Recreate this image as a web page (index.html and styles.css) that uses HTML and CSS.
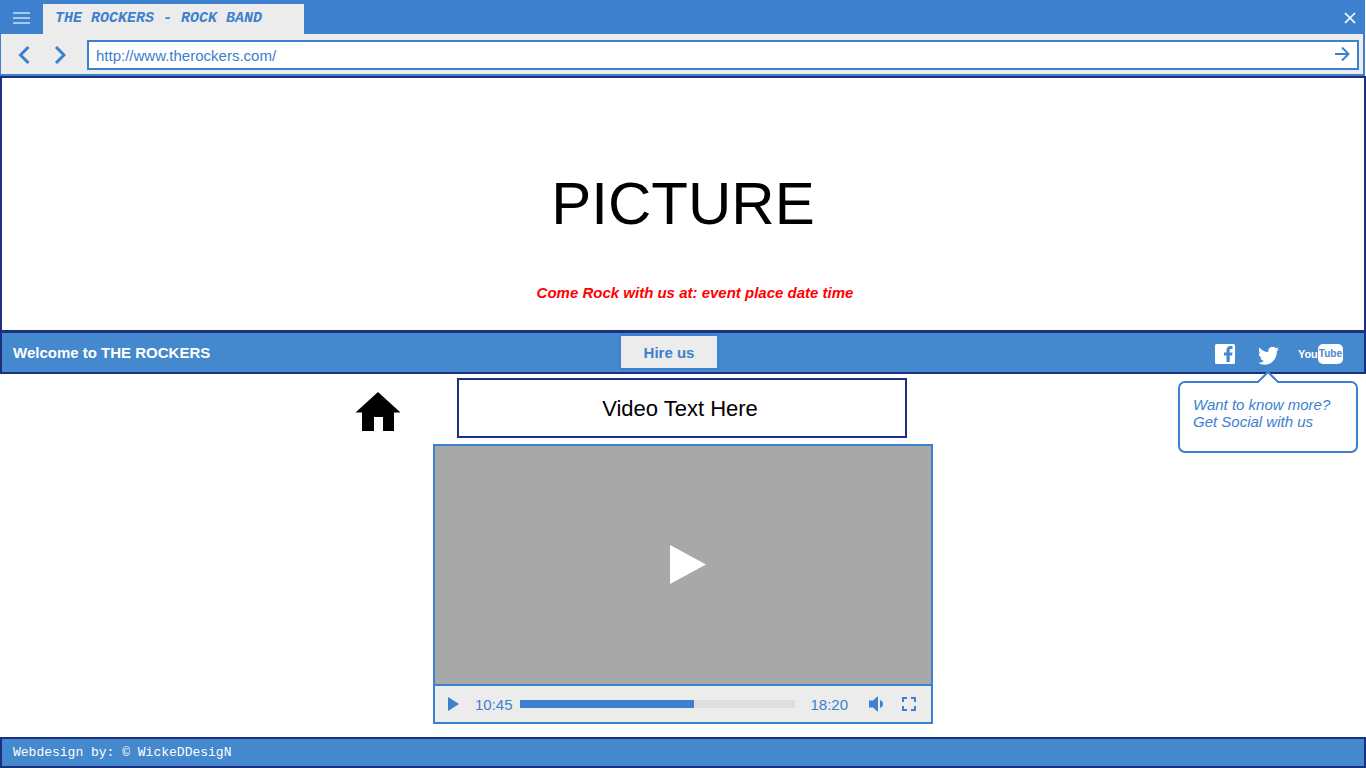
FILE: index.html
```html
<!DOCTYPE html>
<html lang="en">
<head>
<meta charset="utf-8">
<meta name="viewport" content="width=device-width, initial-scale=1">
<title>THE ROCKERS - ROCK BAND</title>
<link rel="stylesheet" href="styles.css">
</head>
<body class="page">
<header class="browser">
  <div class="tabs">
    <button class="icon-btn menu-btn" type="button" aria-label="Menu">
      <svg width="17" height="12" viewBox="0 0 17 12"><path d="M0 1h17M0 6h17M0 11h17" stroke="currentColor" stroke-width="2"/></svg>
    </button>
    <div class="tab">THE ROCKERS - ROCK BAND</div>
    <button class="icon-btn close-btn" type="button" aria-label="Close">
      <svg width="12" height="12" viewBox="0 0 12 12"><path d="M1 1l10 10M11 1L1 11" stroke="currentColor" stroke-width="1.7"/></svg>
    </button>
  </div>
  <div class="toolbar">
    <button class="icon-btn" type="button" aria-label="Back">
      <svg width="12" height="18" viewBox="0 0 12 18"><path d="M10.500 1L2.500 9l8 8" fill="none" stroke="currentColor" stroke-width="3"/></svg>
    </button>
    <button class="icon-btn" type="button" aria-label="Forward">
      <svg width="12" height="18" viewBox="0 0 12 18"><path d="M2 1l8 8-8 8" fill="none" stroke="currentColor" stroke-width="3"/></svg>
    </button>
    <form class="address">
      <input class="address-input" type="text" aria-label="Address" value="http://www.therockers.com/">
      <button class="icon-btn" type="button" aria-label="Go">
        <svg width="16" height="16" viewBox="0 0 16 16"><path d="M0 7h14M7 .5L13.500 7 7 13.500" fill="none" stroke="currentColor" stroke-width="2"/></svg>
      </button>
    </form>
  </div>
</header>

<section class="hero">
  <h1 class="hero-title">PICTURE</h1>
  <p class="hero-event">Come Rock with us at: event place date time</p>
</section>

<nav class="navbar">
  <strong class="welcome">Welcome to THE ROCKERS</strong>
  <button class="hire" type="button">Hire us</button>
  <div class="social">
    <a class="social-link" href="#facebook" aria-label="Facebook">
      <svg width="20" height="20" viewBox="0 0 20 20"><rect width="20" height="20" rx="1.500" fill="currentColor"/><path fill="#4488ce" d="M11.500 18v-6.500H9V8.500h2.500V6.300c0-2.700 1.300-4.300 4-4.300h2v3H16c-1 0-1.300.5-1.300 1.400v2.100h2.800l-.4 3h-2.400V18z"/></svg>
    </a>
    <a class="social-link twitter" href="#twitter" aria-label="Twitter">
      <svg width="21" height="18" viewBox="0 2.500 24 19.500" preserveAspectRatio="none"><path fill="currentColor" d="M23.950 4.570a10 10 0 0 1-2.820.77 4.960 4.960 0 0 0 2.160-2.720c-.95.550-2 .96-3.130 1.180a4.920 4.920 0 0 0-8.380 4.480C7.690 8.100 4.070 6.130 1.640 3.160a4.820 4.820 0 0 0-.67 2.480c0 1.710.87 3.210 2.190 4.100a4.900 4.900 0 0 1-2.230-.62v.06a4.920 4.920 0 0 0 3.950 4.830 5 5 0 0 1-2.210.08 4.940 4.940 0 0 0 4.600 3.420A9.870 9.870 0 0 1 0 19.540a14 14 0 0 0 7.550 2.210c9.050 0 14-7.500 14-13.980 0-.21 0-.42-.02-.63a9.940 9.940 0 0 0 2.460-2.550z"/></svg>
    </a>
    <a class="social-link youtube" href="#youtube"><span class="you">You</span><span class="tube">Tube</span></a>
  </div>
</nav>

<main class="content">
  <a class="home" href="#home" aria-label="Home">
    <svg width="46" height="40" viewBox="0 0 46 40"><path d="M23 0L45.500 20.500H39V39H28V25h-9v14H7V20.500H.5z"/></svg>
  </a>
  <div class="media">
    <h2 class="video-title">Video Text Here</h2>
    <div class="player">
      <button class="screen" type="button" aria-label="Play video">
        <svg width="38" height="40" viewBox="0 0 38 40"><path d="M1 0v39l36-19.500z" fill="#fff"/></svg>
      </button>
      <div class="controls">
        <button class="icon-btn" type="button" aria-label="Play">
          <svg width="12" height="14" viewBox="0 0 12 14"><path d="M1 0v14l11-7z" fill="currentColor"/></svg>
        </button>
        <span class="elapsed">10:45</span>
        <input class="seek" type="range" min="0" max="275" value="174" aria-label="Seek">
        <span class="total">18:20</span>
        <button class="icon-btn volume" type="button" aria-label="Volume">
          <svg width="15" height="16" viewBox="0 0 15 16"><path d="M0 4.500h4L9 0v16l-5-4.500H0zM11 4q3 1.200 3 4t-3 4z" fill="currentColor"/></svg>
        </button>
        <button class="icon-btn" type="button" aria-label="Full screen">
          <svg width="14" height="14" viewBox="0 0 14 14"><path d="M1 5V1h4M9 1h4v4M13 9v4H9M5 13H1V9" fill="none" stroke="currentColor" stroke-width="2"/></svg>
        </button>
      </div>
    </div>
  </div>
  <aside class="tip">
    <svg class="tip-arrow" width="22" height="12" viewBox="0 0 22 12"><path d="M0 12v-1L11 1l11 10v1z" fill="#fff"/><path d="M0 11h1L11 1l10 10h1" fill="none" stroke="#3d80cd" stroke-width="2"/></svg>
    Want to know more?<br>Get Social with us
  </aside>
</main>

<footer class="footer">Webdesign by: © WickeDDesigN</footer>
</body>
</html>
```
FILE: styles.css
```css
:root {
  --blue: #3d80cd;
  --bar: #4488ce;
  --navy: #1d2f80;
  --panel: #ececec;
}

* { box-sizing: border-box; }

.page {
  display: flex;
  flex-direction: column;
  min-height: 100vh;
  margin: 0;
  background: #fff;
  color: var(--blue);
  font: 15px/17px "Liberation Sans", Arial, sans-serif;
}

button, input { font: inherit; color: inherit; }
svg { display: block; }

.icon-btn {
  display: flex;
  flex: none;
  padding: 0;
  border: 0;
  background: none;
  cursor: pointer;
}

.browser {
  margin-right: 1px;
  border: solid var(--blue);
  border-width: 0 2px 2px 1px;
  background: var(--panel);
}

.tabs {
  display: flex;
  align-items: center;
  height: 34px;
  padding: 2px 7px 0 12px;
  background: var(--blue);
}

.menu-btn { color: #a9c8eb; }

.tab {
  width: 261px;
  margin: 2px 0 0 13px;
  padding: 0 12px;
  background: var(--panel);
  font: italic bold 15px/30px "Courier New", "Liberation Mono", monospace;
  white-space: nowrap;
}

.close-btn {
  margin-left: auto;
  color: #fff;
}

.toolbar {
  display: flex;
  align-items: center;
  gap: 24px;
  padding: 6px 4px 4px 17px;
}

.address {
  display: flex;
  flex: 1;
  align-items: center;
  height: 30px;
  margin: 0 0 0 -3px;
  padding: 0 6px 0 7px;
  border: 2px solid var(--blue);
  background: #fff;
}

.address-input {
  flex: 1;
  min-width: 0;
  padding: 0;
  border: 0;
  outline: 0;
  background: none;
}

.hero {
  display: flex;
  flex-direction: column;
  align-items: center;
  min-height: 254px;
  padding-top: 92px;
  border: solid var(--navy);
  border-width: 2px 2px 0;
}

.hero-title {
  margin: 0;
  color: #000;
  font-size: 60px;
  font-weight: 400;
  line-height: 68px;
}

.hero-event {
  margin: 46px 0 0;
  padding-left: 24px;
  color: #f00;
  font-style: italic;
  font-weight: 700;
}

.navbar {
  display: grid;
  grid-template-columns: 1fr auto 1fr;
  align-items: center;
  height: 44px;
  padding: 0 21px 0 11px;
  border: solid var(--navy);
  border-width: 3px 2px 2px;
  background: var(--bar);
  color: #fff;
}

.hire {
  align-self: start;
  width: 100px;
  height: 36px;
  margin: 1px 18px 0 0;
  padding: 0;
  border: 2px solid var(--blue);
  background: var(--panel);
  color: var(--blue);
  font-weight: 700;
}

.social {
  display: flex;
  align-items: center;
  justify-content: flex-end;
  gap: 19px;
  padding-top: 2px;
}

.social-link {
  color: #fff;
  text-decoration: none;
}

.twitter { padding: 4px 0 0 4px; }

.youtube {
  display: flex;
  font: bold 11px/20px "Liberation Sans", Arial, sans-serif;
}

.tube {
  padding: 0 1px;
  border-radius: 5px;
  background: #fff;
  color: var(--bar);
  font-size: 10px;
}

.content {
  display: grid;
  flex: 1;
  grid-template-columns: 1fr 500px 1fr;
  align-items: start;
  padding: 4px 8px 13px;
}

.home {
  justify-self: end;
  margin: 14px 32px 0 0;
}

.video-title {
  width: 450px;
  margin: 0 24px 6px;
  padding: 2px 4px 0 0;
  border: 2px solid var(--navy);
  color: #000;
  font-size: 22px;
  font-weight: 400;
  line-height: 54px;
  text-align: center;
}

.player {
  border: 2px solid var(--blue);
  background: var(--panel);
}

.screen {
  display: flex;
  align-items: center;
  justify-content: center;
  width: 100%;
  height: 238px;
  padding: 0 0 0 10px;
  border: 0;
  background: #a8a8a8;
}

.controls {
  display: flex;
  align-items: center;
  height: 38px;
  padding: 0 15px 0 12px;
  border-top: 2px solid var(--blue);
}

.elapsed { margin: 0 7px 0 16px; }
.total { margin: 0 21px 0 15px; }
.volume { margin-right: 18px; }

.seek {
  flex: 1;
  min-width: 0;
  height: 8px;
  margin: 0;
  appearance: none;
  background: linear-gradient(to right, var(--blue) 63.3%, #dedede 63.3%);
}

.seek::-webkit-slider-thumb {
  width: 1px;
  height: 8px;
  appearance: none;
}

.tip {
  position: relative;
  justify-self: end;
  width: 180px;
  min-height: 72px;
  margin-top: 3px;
  padding: 13px;
  border: 2px solid var(--blue);
  border-radius: 7px;
  background: #fff;
  font-style: italic;
}

.tip-arrow {
  position: absolute;
  top: -12px;
  left: 77px;
}

.footer {
  height: 31px;
  padding: 1px 11px 0;
  border: 2px solid var(--navy);
  background: var(--bar);
  color: #fff;
  font: 13px/26px "Courier New", "Liberation Mono", monospace;
}
```
